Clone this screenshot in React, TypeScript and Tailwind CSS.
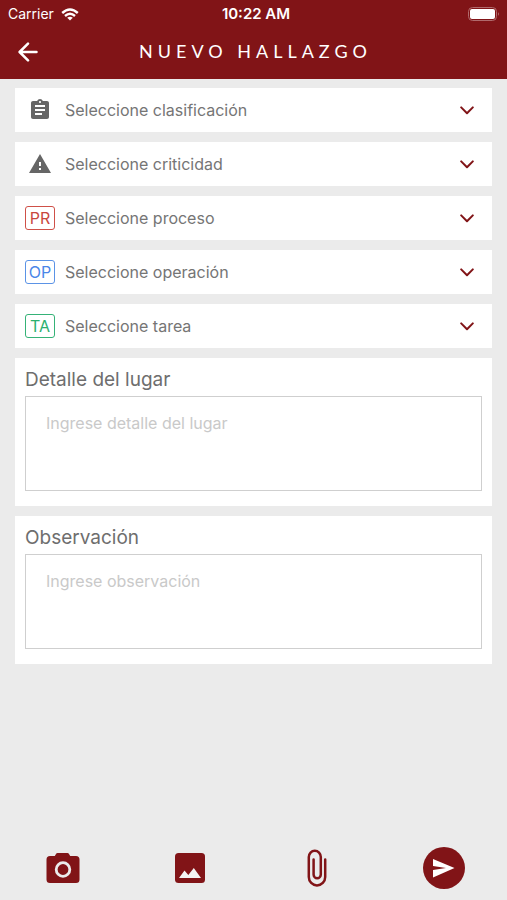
import { useState } from 'react';
import type { ReactNode } from 'react';
import { MdAssignment, MdWarning } from 'react-icons/md';

type SelectRowProps = {
  id: string;
  label: string;
  icon: ReactNode;
  options: string[];
};

type TextCardProps = {
  id: string;
  label: string;
  placeholder: string;
};

function StatusBar() {
  return (
    <div className="grid h-7 grid-cols-3 items-center pl-2 pr-[7px] text-white">
      <div className="flex items-center gap-[7px] text-sm">
        <span>Carrier</span>
        <svg viewBox="0 0 18 13" className="h-[13px] w-[18px]" fill="none" stroke="currentColor" strokeWidth="2.4">
          <path d="M1.2 5 Q9 -2 16.8 5" />
          <path d="M4 8 Q9 3.6 14 8" />
          <path d="M9 12.6 L6.2 9.8 Q9 7.6 11.8 9.8 Z" fill="currentColor" stroke="none" />
        </svg>
      </div>
      <span className="pl-1 text-center text-[15px] font-semibold">10:22 AM</span>
      <svg viewBox="0 0 32 14" className="h-[14px] w-8 justify-self-end" fill="none">
        <rect x="0.5" y="0.5" width="28" height="13" rx="4" stroke="#b06a6c" />
        <rect x="2" y="2" width="25" height="10" rx="2" fill="#fff" />
        <path d="M30 5 Q31.6 7 30 9 Z" fill="#c58a8c" />
      </svg>
    </div>
  );
}

function BackIcon() {
  return (
    <svg viewBox="0 0 20 20" className="h-5 w-5" fill="none" stroke="currentColor" strokeWidth="2.5" strokeLinecap="round" strokeLinejoin="round">
      <path d="M18.5 10 H1.8 M10 1.6 L1.6 10 L10 18.4" />
    </svg>
  );
}

function ChevronIcon() {
  return (
    <svg viewBox="0 0 14 9" className="pointer-events-none h-[9px] w-[14px] shrink-0" fill="none" stroke="#811417" strokeWidth="2" strokeLinecap="round" strokeLinejoin="round">
      <path d="M1.2 1.4 L7 7.2 L12.8 1.4" />
    </svg>
  );
}

function SelectRow({ id, label, icon, options }: SelectRowProps) {
  const [value, setValue] = useState('');

  return (
    <div className="flex h-11 items-center bg-white pl-[10px] pr-[18px]">
      <label htmlFor={id} aria-label={label} className="flex w-[30px] shrink-0 justify-center">
        {icon}
      </label>
      <select
        id={id}
        value={value}
        onChange={(e) => setValue(e.target.value)}
        className="ml-[10px] h-full min-w-0 flex-1 appearance-none bg-transparent text-base text-[#757575] outline-none"
      >
        <option value="">{label}</option>
        {options.map((option) => (
          <option key={option} value={option}>
            {option}
          </option>
        ))}
      </select>
      <ChevronIcon />
    </div>
  );
}

function TextCard({ id, label, placeholder }: TextCardProps) {
  const [value, setValue] = useState('');

  return (
    <div className="bg-white px-[10px] pb-[15px] pt-[9px]">
      <label htmlFor={id} className="block h-[29px] text-[19px] leading-[26px] text-[#6e6e6e]">
        {label}
      </label>
      <textarea
        id={id}
        value={value}
        onChange={(e) => setValue(e.target.value)}
        placeholder={placeholder}
        className="block h-[95px] w-full resize-none border border-[#cfcfcf] px-5 py-[14px] text-base leading-6 text-[#6e6e6e] outline-none placeholder:text-[#c9c9c9]"
      />
    </div>
  );
}

const badge = 'flex h-6 w-[30px] items-center justify-center rounded-[3px] border text-base';

export default function App() {
  return (
    <div className="flex min-h-screen flex-col bg-[#ebebeb] font-['Inter','Liberation_Sans',sans-serif]">
      <header className="bg-[#811417]">
        <StatusBar />
        <div className="grid h-[51px] grid-cols-[56px_1fr_56px] items-center pb-1 text-white">
          <button type="button" aria-label="Volver" className="flex justify-center">
            <BackIcon />
          </button>
          <h1 className="pb-[2px] pl-1 text-center font-['Lato','Liberation_Sans',sans-serif] text-lg leading-6 tracking-[5px]">
            NUEVO HALLAZGO
          </h1>
        </div>
      </header>

      <main className="flex flex-1 flex-col gap-[10px] px-[15px] pt-[9px]">
        <SelectRow
          id="clasificacion"
          label="Seleccione clasificación"
          icon={<MdAssignment size={24} color="#666" />}
          options={['Acto', 'Condición']}
        />
        <SelectRow
          id="criticidad"
          label="Seleccione criticidad"
          icon={<MdWarning size={24} color="#666" />}
          options={['Alta', 'Media', 'Baja']}
        />
        <SelectRow
          id="proceso"
          label="Seleccione proceso"
          icon={<span className={`${badge} border-[#cf5048] text-[#c9473e]`}>PR</span>}
          options={[]}
        />
        <SelectRow
          id="operacion"
          label="Seleccione operación"
          icon={<span className={`${badge} border-[#5b93e6] text-[#4a86e8]`}>OP</span>}
          options={[]}
        />
        <SelectRow
          id="tarea"
          label="Seleccione tarea"
          icon={<span className={`${badge} border-[#35b277] text-[#2bb06f]`}>TA</span>}
          options={[]}
        />
        <TextCard id="lugar" label="Detalle del lugar" placeholder="Ingrese detalle del lugar" />
        <TextCard id="observacion" label="Observación" placeholder="Ingrese observación" />
      </main>

      <footer className="grid h-16 grid-cols-4 items-center justify-items-center text-[#811417]">
        <button type="button" aria-label="Tomar foto">
          <svg viewBox="0 0 34 30" className="h-[30px] w-[34px]" fill="currentColor">
            <path d="M11.5 0 H21.5 Q22.5 0 23 1 L24.2 3 H30 Q33.5 3 33.5 6.5 V26.5 Q33.5 30 30 30 H4 Q0.5 30 0.5 26.5 V6.5 Q0.5 3 4 3 H8.8 L10 1 Q10.5 0 11.5 0 Z" />
            <circle cx="17" cy="16.5" r="6.8" fill="none" stroke="#ebebeb" strokeWidth="2.8" />
          </svg>
        </button>
        <button type="button" aria-label="Elegir imagen">
          <svg viewBox="0 0 30 30" className="h-[30px] w-[30px]">
            <rect width="30" height="30" rx="3.5" fill="currentColor" />
            <path d="M4 25 L9.5 17.5 L13.3 22 L18.8 15 L26 25 Z" fill="#f4f4f4" />
          </svg>
        </button>
        <button type="button" aria-label="Adjuntar archivo">
          <svg viewBox="0 0 20 38" className="h-[38px] w-5" fill="none" stroke="currentColor" strokeWidth="2.5" strokeLinecap="round">
            <path d="M18.2 10.5 V28 A8.2 8.4 0 0 1 1.8 28 V8 A6 6.3 0 0 1 13.8 8 V25.5 A3.6 3.8 0 0 1 6.6 25.5 V10.5" />
          </svg>
        </button>
        <button type="button" aria-label="Enviar" className="rounded-full">
          <svg viewBox="0 0 42 42" className="h-[42px] w-[42px]">
            <circle cx="21" cy="21" r="21" fill="currentColor" />
            <path d="M10 12 L31.5 21 L10 30.5 V23 L23 21 L10 19 Z" fill="#fff" />
          </svg>
        </button>
      </footer>
    </div>
  );
}
